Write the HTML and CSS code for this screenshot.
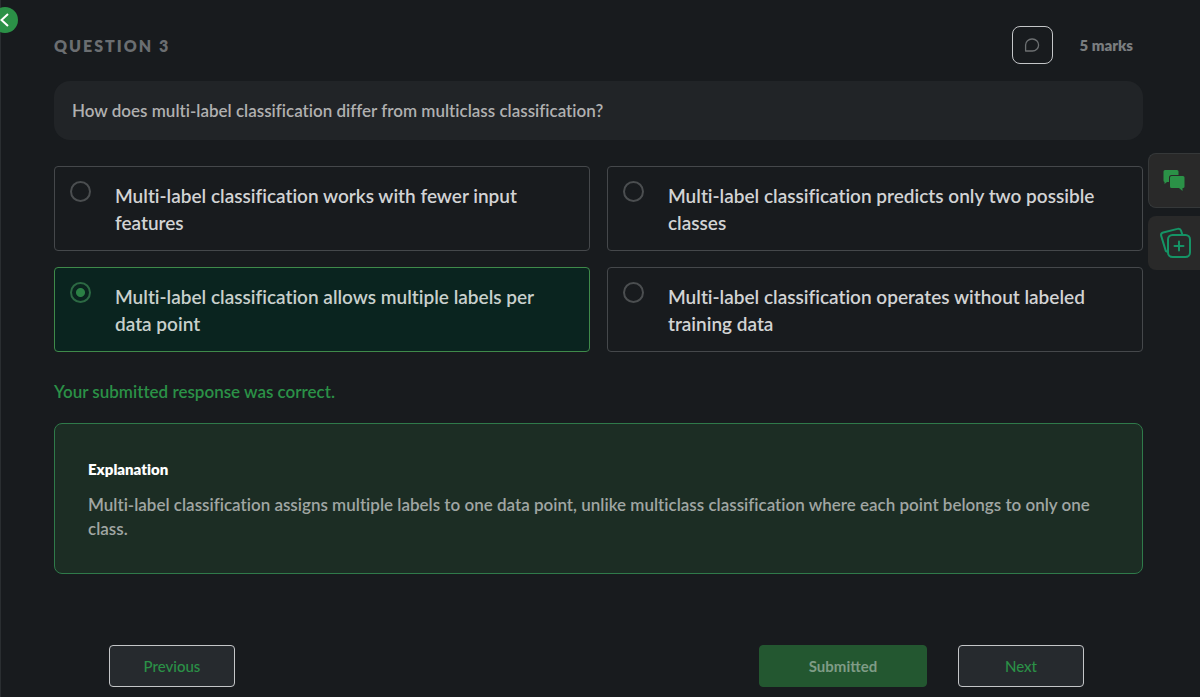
FILE: index.html
```html
<!DOCTYPE html>
<html lang="en">
<head>
  <meta charset="UTF-8" />
  <meta name="viewport" content="width=device-width, initial-scale=1" />
  <title>Question 3</title>
  <link rel="stylesheet" href="styles.css">
</head>
<body>
  <button class="collapse" type="button" aria-label="Back">
    <svg width="10" height="14" viewBox="0 0 10 14" fill="none" stroke="#fff" stroke-width="2"><path d="M8 1 1.500 7 8 13" /></svg>
  </button>

  <main class="page">
    <header class="header">
      <h1>QUESTION 3</h1>
      <button class="comment" type="button" aria-label="Comment">
        <svg width="16" height="16" viewBox="0 0 16 16" fill="none" stroke="#6d7072" stroke-width="1.300" stroke-linejoin="round"><path d="M1.600 14V8A6.300 6 0 0 1 8 2h.4a6.200 6 0 0 1 0 12z" /></svg>
      </button>
      <span class="marks">5 marks</span>
    </header>

    <p class="question">How does multi-label classification differ from multiclass classification?</p>

    <form class="options">
      <label class="option">
        <input type="radio" name="answer" />
        <span>Multi-label classification works with fewer input features</span>
      </label>
      <label class="option">
        <input type="radio" name="answer" />
        <span>Multi-label classification predicts only two possible classes</span>
      </label>
      <label class="option selected">
        <input type="radio" name="answer" checked />
        <span>Multi-label classification allows multiple labels per data point</span>
      </label>
      <label class="option">
        <input type="radio" name="answer" />
        <span>Multi-label classification operates without labeled training data</span>
      </label>
    </form>

    <p class="feedback">Your submitted response was correct.</p>

    <section class="explanation">
      <h2>Explanation</h2>
      <p>Multi-label classification assigns multiple labels to one data point, unlike multiclass classification where each point belongs to only one class.</p>
    </section>

    <footer class="actions">
      <button class="btn" type="button">Previous</button>
      <button class="btn submit" type="button" disabled>Submitted</button>
      <button class="btn" type="button">Next</button>
    </footer>
  </main>

  <aside class="tools">
    <button class="tool chat" type="button" aria-label="Chat">
      <svg width="22" height="22" viewBox="0 0 22 22" fill="#2b9147"><path d="M2 0h12a1.500 1.500 0 0 1 1.500 1.500V5H8.500A2.500 2.500 0 0 0 6 7.500V12H4l-2.500 2V12A1.500 1.500 0 0 1 .5 10.500v-9A1.500 1.500 0 0 1 2 0z" /><path d="M8.500 6h11.500a1.500 1.500 0 0 1 1.500 1.500v9a1.500 1.500 0 0 1-1.500 1.500h-.5V21L16 18H8.500A1.500 1.500 0 0 1 7 16.500V7.500A1.500 1.500 0 0 1 8.500 6z" /></svg>
    </button>
    <button class="tool" type="button" aria-label="Add flashcard">
      <svg width="32" height="32" viewBox="0 0 32 32" fill="none" stroke="#159365" stroke-width="2" stroke-linecap="round" stroke-linejoin="round"><rect x="8" y="8" width="22" height="22" rx="4.500" /><path d="M19 14.500v9M14.500 19h9" /><path d="M22.500 8 21 3.700A2.800 2.800 0 0 0 17.500 1.900L3.200 5.500A2.800 2.800 0 0 0 1.200 8.900L5.800 24l2.200 1" /></svg>
    </button>
  </aside>
</body>
</html>
```

FILE: styles.css
```css
* {
  box-sizing: border-box;
}

body {
  margin: 0;
  min-height: 100vh;
  background: #181b1e;
  border-left: 1px solid #2a2e31;
  color: #d2d3d4;
  font-family: Lato, "Open Sans", sans-serif;
  font-variant-ligatures: no-common-ligatures;
}

h1, h2, p {
  margin: 0;
}

button {
  font-family: inherit;
  cursor: pointer;
}

.page {
  padding: 26px 57px 8px 53px;
}

.collapse {
  position: absolute;
  left: -8px;
  top: 7px;
  display: flex;
  align-items: center;
  justify-content: center;
  width: 26px;
  height: 26px;
  padding: 0;
  border: none;
  border-radius: 50%;
  background: #2b9147;
}

.header {
  display: flex;
  align-items: center;
  padding-right: 10px;
}

.header h1 {
  margin-right: auto;
  color: #6b6e71;
  font-size: 16px;
  font-weight: 800;
  letter-spacing: 2px;
}

.comment {
  display: flex;
  align-items: center;
  justify-content: center;
  width: 41px;
  height: 38px;
  margin-right: 27px;
  padding: 0;
  background: transparent;
  border: 1px solid #c4c6c8;
  border-radius: 8px;
}

.marks {
  color: #7a7d7f;
  font-size: 15px;
  font-weight: 800;
}

.question {
  margin-top: 17px;
  padding: 18px;
  background: #212427;
  border-radius: 16px;
  color: #b0b0b0;
  font-size: 17px;
  font-weight: 600;
  line-height: 23px;
}

.options {
  display: grid;
  grid-template-columns: 1fr 1fr;
  gap: 16px 17px;
  margin-top: 26px;
}

.option {
  display: flex;
  align-items: flex-start;
  gap: 24px;
  padding: 14px 15px;
  border: 1px solid #45484b;
  border-radius: 4px;
  font-size: 19px;
  font-weight: 600;
  line-height: 27px;
}

.option.selected {
  background: #0a241f;
  border-color: #3f8a4a;
  color: #c8d0cc;
}

.option input {
  appearance: none;
  flex-shrink: 0;
  width: 21px;
  height: 21px;
  margin: 0;
  border: 2px solid #4b4e50;
  border-radius: 50%;
}

.option input:checked {
  border-color: #2c6943;
  background: radial-gradient(circle, #2b8045 4px, transparent 5px);
}

.option span {
  padding-top: 1px;
}

.feedback {
  margin-top: 28px;
  color: #2b9147;
  font-size: 17px;
  font-weight: 600;
  line-height: 24px;
}

.explanation {
  margin-top: 19px;
  padding: 33px 33px 32px;
  background: #1c2d24;
  border: 1px solid #2f7a4a;
  border-radius: 8px;
}

.explanation h2 {
  margin-bottom: 12px;
  color: #fff;
  font-size: 15px;
  font-weight: 800;
  line-height: 24px;
}

.explanation p {
  color: #a0a6a3;
  font-size: 17px;
  font-weight: 600;
  line-height: 24px;
}

.actions {
  display: flex;
  gap: 31px;
  margin-top: 71px;
  padding: 0 59px 0 55px;
}

.btn {
  width: 126px;
  height: 42px;
  padding-bottom: 2px;
  background: #262a2e;
  border: 1px solid #c4c6c8;
  border-radius: 4px;
  color: #2b9147;
  font-size: 15px;
  font-weight: 500;
}

.btn.submit {
  width: 168px;
  margin-left: auto;
  background: #235730;
  border-color: #235730;
  color: #7f9c86;
  font-weight: 700;
}

.tools {
  position: absolute;
  right: 0;
  top: 153px;
  display: flex;
  flex-direction: column;
  gap: 8px;
}

.tool {
  display: flex;
  align-items: center;
  width: 52px;
  height: 54px;
  padding: 0 0 0 12px;
  background: #292929;
  border: none;
  border-radius: 8px 0 0 8px;
}

.tool.chat {
  height: 55px;
  padding-left: 14px;
  border: 1px solid #353839;
  border-right: none;
}
```
